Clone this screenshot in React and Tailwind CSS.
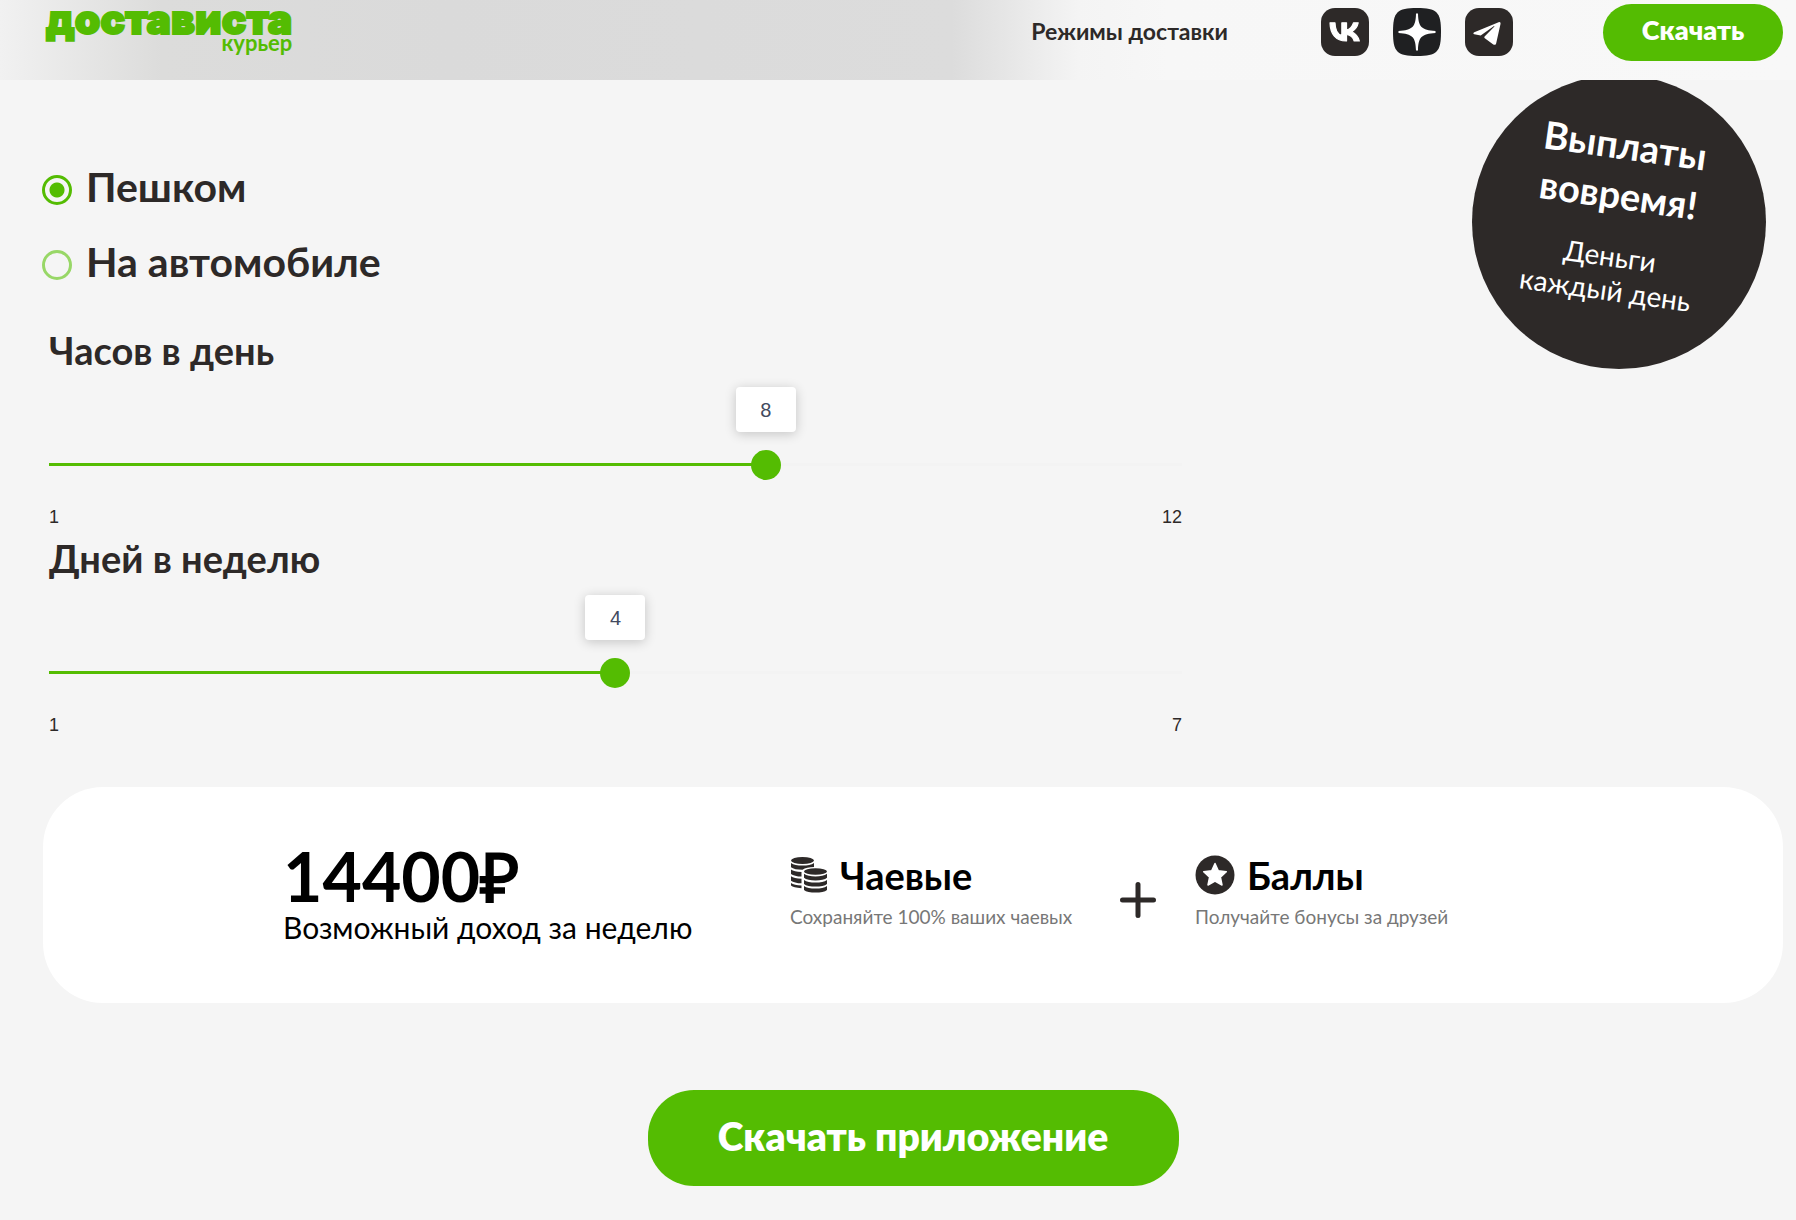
import { useState } from 'react';

const TRANSPORT = [
  { id: 'walk', label: 'Пешком' },
  { id: 'car',  label: 'На автомобиле' },
];

function VkIcon() {
  return (
    <svg viewBox="0 0 48 48" className="w-12 h-12" aria-hidden="true">
      <rect width="48" height="48" rx="14" fill="#2d2928" />
      <path
        fill="#fff"
        stroke="#fff"
        strokeWidth=".7"
        strokeLinejoin="round"
        transform="translate(3.300 1.700) scale(1.650)"
        d="M13.162 18.994c-6.098 0-9.570-4.172-9.714-11.104h3.047c.1 5.093 2.344 7.250 4.120 7.694V7.890h2.870v4.390c1.762-.188 3.612-2.188 4.236-4.390h2.870a8.480 8.480 0 0 1-3.904 5.530 8.790 8.790 0 0 1 4.570 5.570h-3.160a5.500 5.500 0 0 0-4.612-3.972v3.972z"
      />
    </svg>
  );
}

function ZenIcon() {
  return (
    <svg viewBox="0 0 48 48" className="w-12 h-12" aria-hidden="true">
      <path fill="#1f2022" d="M24 0c20 0 24 4 24 24s-4 24-24 24S0 44 0 24 4 0 24 0z" />
      <path
        fill="#fff"
        d="M23 5.500h2c.3 13.500 3.500 16.500 17.500 17.500v2C28.500 26 25.300 29 25 42.500h-2C22.700 29 19.500 26 5.500 25v-2C19.500 22 22.700 19 23 5.500z"
      />
    </svg>
  );
}

function TelegramIcon() {
  return (
    <svg viewBox="0 0 48 48" className="w-12 h-12" aria-hidden="true">
      <rect width="48" height="48" rx="14" fill="#2d2928" />
      <path
        fill="#fff"
        d="M33.600 14.200 9.300 24.200c-1.200.5-1.200 1.700 0 2l6.400 1.300 13-9.300c.5-.3.900.1.500.5L19.600 28.600c-.5.500-.4 1.200.2 1.600l8.500 6.200c1.300.8 2.600.4 2.900-1.200l4.300-19.300c.3-1.500-.6-2.200-1.900-1.700z"
      />
    </svg>
  );
}

function CoinsIcon() {
  return (
    <svg viewBox="0 0 38 36" className="w-[38px] h-9" fill="#2d2928" aria-hidden="true">
      <ellipse cx="12.500" cy="3.500" rx="11.500" ry="3.500" />
      <path d="M1 6c2.500 1.800 6.500 2.600 11.500 2.600S21.500 7.800 24 6v4c-5 .1-9 1-11.500 2.800C7.500 12.800 3 12 1 10.300z" />
      <path d="M1 12.500c2 1.500 5.500 2.400 10.500 2.600v4.500C7 19.500 3 18.600 1 17z" />
      <path d="M1 19.200c2 1.500 5.500 2.400 10.500 2.600v4.500C7 26.200 3 25.300 1 23.700z" />
      <path d="M1 26c2 1.500 5.500 2.300 10.500 2.500v2.700C6 31 2.500 30.100 1 28.600z" />
      <ellipse cx="25.500" cy="14.500" rx="11.500" ry="3.300" />
      <path d="M14 16.800c2.500 1.800 6.500 2.600 11.500 2.600S34.500 18.600 37 16.800v4c-2 1.800-6.500 2.600-11.500 2.600S16 22.600 14 20.800z" />
      <path d="M14 22.900c2.500 1.800 6.500 2.600 11.500 2.600S34.500 24.700 37 22.900v4c-2 1.800-6.500 2.600-11.500 2.600S16 28.700 14 26.900z" />
      <path d="M14 29c2.500 1.800 6.500 2.600 11.500 2.600S34.500 30.800 37 29v4c-2 1.800-6.500 2.600-11.500 2.600S16 34.800 14 33z" />
    </svg>
  );
}

function StarIcon() {
  return (
    <svg viewBox="0 0 40 40" className="w-10 h-10" aria-hidden="true">
      <circle cx="20" cy="20" r="19.500" fill="#2d2928" />
      <path
        d="M20 8.500l3.300 7.300 8 .9-5.900 5.400 1.600 7.900-7-4-7 4 1.600-7.900-5.900-5.400 8-.9z"
        fill="#fff"
        stroke="#fff"
        strokeWidth="1.500"
        strokeLinejoin="round"
      />
    </svg>
  );
}

function Header() {
  return (
    <header className="relative z-10 h-20 flex items-start justify-between pl-[46px] pr-[13px] bg-[linear-gradient(90deg,#f1f1f1_0%,#dcdcdb_9%,#dadada_25%,#dcdcdc_53%,#e6e6e6_56%,#f4f4f4_60%,#f7f7f7_65%,#f8f8f8_100%)]">
      <a href="#top" className="flex flex-col items-end text-[#54bc02]">
        <span className="text-[41px] leading-[38px] font-black font-[Inter,sans-serif] [-webkit-text-stroke:2px_#54bc02]">достависта</span>
        <span className="-mt-[7px] text-[22px] leading-6 font-bold">курьер</span>
      </a>

      <div className="flex items-start">
        <a href="#modes" className="mt-[15px] text-[23px] leading-8 font-bold">Режимы доставки</a>

        <div className="flex gap-6 mt-2 ml-[93px]">
          <a href="#vk" aria-label="VK"><VkIcon /></a>
          <a href="#zen" aria-label="Дзен"><ZenIcon /></a>
          <a href="#telegram" aria-label="Telegram"><TelegramIcon /></a>
        </div>

        <button className="mt-1 ml-[90px] pb-1 w-[180px] h-[57px] rounded-full bg-[#54bc02] text-white text-[27px] font-extrabold cursor-pointer">
          Скачать
        </button>
      </div>
    </header>
  );
}

function RangeField({ id, label, min, max, value, onChange }) {
  const part = (value - min) / (max - min);
  const center = `calc(15px + (100% - 30px) * ${part})`;

  return (
    <div className="mb-[5px]">
      <label htmlFor={id} className="block text-[38px] leading-[48px] font-bold">{label}</label>

      <div className="relative mt-[76px]">
        <output
          htmlFor={id}
          className="absolute bottom-12 -translate-x-1/2 w-[60px] h-[45px] flex items-center justify-center rounded bg-white text-xl text-[#424a60] font-['Liberation_Sans',sans-serif] shadow-[0_2px_12px_rgba(0,0,0,0.2)]"
          style={{ left: center }}
        >
          {value}
        </output>
        <input
          id={id}
          type="range"
          min={min}
          max={max}
          value={value}
          onChange={e => onChange(Number(e.target.value))}
          className="block w-full h-[30px] appearance-none cursor-pointer bg-transparent bg-no-repeat bg-[position:0_13px] bg-[length:100%_3px] [&::-webkit-slider-thumb]:appearance-none [&::-webkit-slider-thumb]:w-[30px] [&::-webkit-slider-thumb]:h-[30px] [&::-webkit-slider-thumb]:rounded-full [&::-webkit-slider-thumb]:bg-[#54bc02]"
          style={{ backgroundImage: `linear-gradient(90deg, #54bc02 ${part * 100}%, #f3f3f3 ${part * 100}%)` }}
        />
      </div>

      <div className="mt-[25px] flex justify-between text-lg leading-6 font-['Liberation_Sans',sans-serif]">
        <span>{min}</span>
        <span>{max}</span>
      </div>
    </div>
  );
}

function Bonus({ icon, title, text }) {
  return (
    <div>
      <div className="flex items-center gap-3">
        {icon}
        <h3 className="text-[38px] leading-[48px] font-bold text-black">{title}</h3>
      </div>
      <p className="mt-1.5 text-[19px] leading-6 text-[#777] whitespace-nowrap">{text}</p>
    </div>
  );
}

export default function App() {
  const [transport, setTransport] = useState('walk');
  const [hours, setHours] = useState(8);
  const [days, setDays] = useState(4);

  const rate = transport === 'walk' ? 450 : 600;

  return (
    <div className="min-h-screen bg-[#f5f5f5] text-[#2d2928] font-[Lato,sans-serif]">
      <Header />

      <main className="relative pl-[43px] pr-[13px] pt-[83px] pb-[34px]">
        {/* Round badge */}
        <div className="absolute right-[30px] -top-[5px] w-[294px] h-[294px] rounded-full bg-[#2d2928] text-white text-center">
          <div className="pt-11 rotate-8">
            <p className="text-[38px] leading-[50px] font-bold">Выплаты<br />вовремя!</p>
            <p className="mt-5 text-[28px] leading-[34px]">Деньги<br />каждый день</p>
          </div>
        </div>

        {/* Transport */}
        <fieldset className="-ml-px flex flex-col items-start gap-[27px]">
          {TRANSPORT.map(({ id, label }) => (
            <label key={id} className="flex items-start gap-3.5 text-[41px] leading-[48px] font-bold cursor-pointer">
              <input
                type="radio"
                name="transport"
                checked={transport === id}
                onChange={() => setTransport(id)}
                className="mt-3 appearance-none w-[30px] h-[30px] rounded-full border-3 border-[#98d767] checked:border-[#54bc02] checked:bg-[radial-gradient(circle,#54bc02_7px,transparent_8px)]"
              />
              {label}
            </label>
          ))}
        </fieldset>

        {/* Sliders */}
        <div className="mt-10 w-2/3 pl-1.5 pr-[21px]">
          <RangeField id="hours" label="Часов в день" min={1} max={12} value={hours} onChange={setHours} />
          <RangeField id="days" label="Дней в неделю" min={1} max={7} value={days} onChange={setDays} />
        </div>

        {/* Income card */}
        <section className="mt-[50px] h-[216px] pl-60 rounded-[60px] bg-white flex items-start">
          <div className="w-[507px] pt-14 text-black">
            <p className="text-[68px] leading-[66px] font-bold">{hours * days * rate}₽</p>
            <p className="text-[30px] leading-9">Возможный доход за неделю</p>
          </div>
          <div className="w-[330px] pt-16">
            <Bonus icon={<CoinsIcon />} title="Чаевые" text="Сохраняйте 100% ваших чаевых" />
          </div>
          <svg viewBox="0 0 36 36" className="w-9 h-9 mt-[95px] mr-[39px]" stroke="#2d2928" strokeWidth="5" strokeLinecap="round" aria-hidden="true">
            <path d="M18 2.500v31M2.500 18h31" />
          </svg>
          <div className="pt-16">
            <Bonus icon={<StarIcon />} title="Баллы" text="Получайте бонусы за друзей" />
          </div>
        </section>

        <button className="block mx-auto mt-[87px] pb-1 w-[531px] h-24 rounded-[46px] bg-[#54bc02] text-white text-[39px] font-extrabold cursor-pointer">
          Скачать приложение
        </button>
      </main>
    </div>
  );
}
